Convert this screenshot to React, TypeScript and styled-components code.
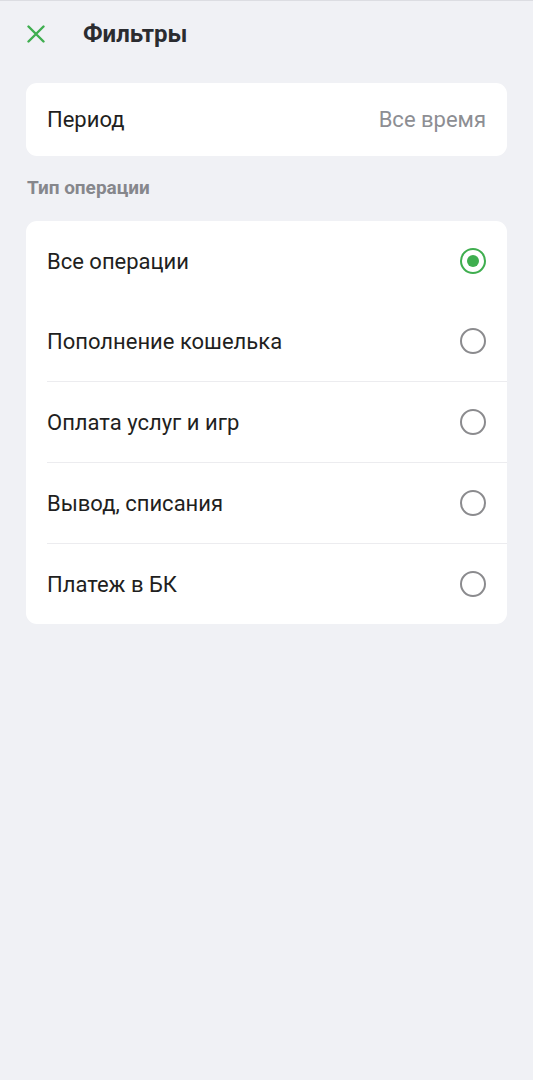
import React, { useState } from "react"
import styled, { createGlobalStyle } from "styled-components"

const GlobalStyle = createGlobalStyle`
  html, body {
    margin: 0;
    padding: 0;
    background: #f0f1f5;
  }
  body {
    font-family: Roboto, "Noto Sans", sans-serif;
    -webkit-font-smoothing: antialiased;
  }
`

const Screen = styled.div`
  min-height: 1080px;
  box-sizing: border-box;
  border-top: 1px solid #dcdde2;
  display: flex;
  flex-direction: column;
`

const Header = styled.header`
  height: 65px;
  display: flex;
  align-items: center;
  padding-left: 27px;
  gap: 38px;
`

const CloseButton = styled.button`
  border: none;
  background: none;
  padding: 0;
  width: 18px;
  height: 18px;
  display: flex;
  cursor: pointer;
`

const Title = styled.h1`
  margin: 0;
  font-size: 24px;
  font-weight: 700;
  color: #2b2c30;
`

const Card = styled.div`
  margin: 0 26px;
  background: #fff;
  border-radius: 11px;
  overflow: hidden;
`

const PeriodCard = styled(Card)`
  margin-top: 17px;
  height: 73px;
  padding: 0 21px;
  display: flex;
  align-items: center;
  justify-content: space-between;
`

const Label = styled.span`
  font-size: 22px;
  color: #1f1f21;
`

const Value = styled.span`
  font-size: 22px;
  color: #8d8e93;
`

const SectionTitle = styled.div`
  margin: 21px 27px 22px;
  font-size: 19px;
  line-height: 22px;
  font-weight: 700;
  color: #86878c;
`

const Row = styled.label<{ $divider: boolean }>`
  margin-left: 21px;
  padding-right: 21px;
  height: 80px;
  display: flex;
  align-items: center;
  justify-content: space-between;
  border-top: ${(p) => (p.$divider ? "1px solid #ececef" : "none")};
  cursor: pointer;
`

const Radio = styled.span<{ $checked: boolean }>`
  width: 26px;
  height: 26px;
  box-sizing: border-box;
  border-radius: 50%;
  border: 2.5px solid ${(p) => (p.$checked ? "#3fae4f" : "#8b8b8e")};
  display: flex;
  align-items: center;
  justify-content: center;

  &::after {
    content: "";
    width: 12px;
    height: 12px;
    border-radius: 50%;
    background: #3fae4f;
    display: ${(p) => (p.$checked ? "block" : "none")};
  }
`

const operations = [
  "Все операции",
  "Пополнение кошелька",
  "Оплата услуг и игр",
  "Вывод, списания",
  "Платеж в БК",
]

const App = () => {
  const [selected, setSelected] = useState(0)

  return (
    <>
      <GlobalStyle />
      <Screen>
        <Header>
          <CloseButton aria-label="close">
            <svg width="18" height="18" viewBox="0 0 18 18">
              <path d="M1.5 1.5 L16.5 16.5 M16.5 1.5 L1.5 16.5" stroke="#3fae4f" strokeWidth="2.4" strokeLinecap="round" />
            </svg>
          </CloseButton>
          <Title>Фильтры</Title>
        </Header>

        <PeriodCard>
          <Label>Период</Label>
          <Value>Все время</Value>
        </PeriodCard>

        <SectionTitle>Тип операции</SectionTitle>

        <Card>
          {operations.map((op, index) => (
            <Row key={op} $divider={index > 1} onClick={() => setSelected(index)}>
              <Label>{op}</Label>
              <Radio $checked={selected === index} />
            </Row>
          ))}
        </Card>
      </Screen>
    </>
  )
}

export default App
